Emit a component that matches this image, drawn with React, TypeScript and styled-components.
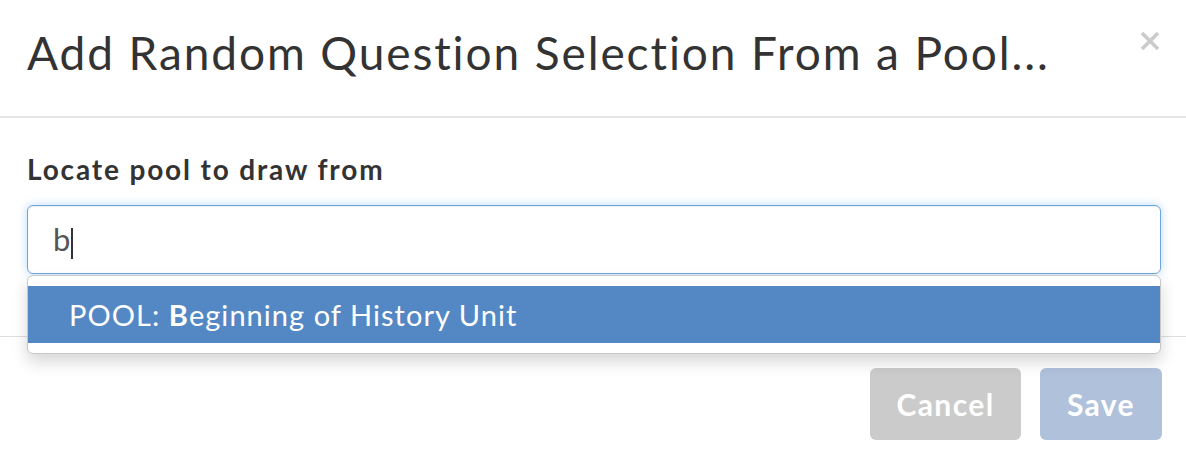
import React, { FC } from "react";
import styled, { createGlobalStyle } from "styled-components";

const GlobalStyle = createGlobalStyle`
  html, body {
    margin: 0;
    padding: 0;
    background: #fff;
  }
  body {
    font-family: Lato, "Open Sans", Arial, sans-serif;
    color: #333;
  }
`;

type ButtonProps = {
  $tone: "muted" | "primary";
  $width: number;
};

const App: FC = () => {
  return (
    <>
      <GlobalStyle />
      <Modal>
        <Header>
          <Title>Add Random Question Selection From a Pool...</Title>
          <CloseButton aria-label="Close">
            <svg width="20" height="20" viewBox="0 0 20 20">
              <path
                d="M2 2 L18 18 M18 2 L2 18"
                stroke="#cbcbcb"
                strokeWidth="3.6"
                strokeLinecap="butt"
              />
            </svg>
          </CloseButton>
        </Header>

        <Body>
          <Label>Locate pool to draw from</Label>
          <SearchWrap>
            <SearchBox>
              <Typed>b</Typed>
              <Caret />
            </SearchBox>
            <Menu>
              <MenuItem $active>
                POOL: <strong>B</strong>eginning of History Unit
              </MenuItem>
            </Menu>
          </SearchWrap>
        </Body>

        <Footer>
          <ActionButton $tone="muted" $width={151}>
            Cancel
          </ActionButton>
          <ActionButton $tone="primary" $width={122}>
            Save
          </ActionButton>
        </Footer>
      </Modal>
    </>
  );
};

const Modal = styled.div`
  width: 1186px;
  height: 464px;
  display: flex;
  flex-direction: column;
  overflow: hidden;
`;

const Header = styled.div`
  height: 116px;
  flex-shrink: 0;
  display: flex;
  justify-content: space-between;
  align-items: flex-start;
  padding: 0 26px 0 27px;
  border-bottom: 2px solid #e6e6e6;
`;

const Title = styled.h1`
  margin: 25px 0 0;
  font-size: 46px;
  font-weight: 400;
  line-height: 56px;
  color: #333;
  letter-spacing: 1.9px;
`;

const CloseButton = styled.button`
  margin: 31px 0 0;
  padding: 0;
  border: 0;
  background: transparent;
  width: 20px;
  height: 20px;
  display: flex;
  cursor: pointer;
`;

const Body = styled.div`
  height: 218px;
  flex-shrink: 0;
  padding: 0 25px 0 27px;
  border-bottom: 1px solid #dedede;
  position: relative;
  z-index: 2;
`;

const Label = styled.div`
  margin-top: 35px;
  font-size: 28px;
  font-weight: 700;
  line-height: 32px;
  color: #333;
  letter-spacing: 1.85px;
`;

const SearchWrap = styled.div`
  position: relative;
  margin-top: 20px;
`;

const SearchBox = styled.div`
  height: 69px;
  box-sizing: border-box;
  border: 1.5px solid #6fa5de;
  border-radius: 6px;
  box-shadow: inset 0 1px 1px rgba(0, 0, 0, 0.075),
    0 0 10px rgba(102, 175, 233, 0.45);
  display: flex;
  align-items: center;
  padding-left: 25px;
  background: #fff;
`;

const Typed = styled.span`
  font-size: 31px;
  color: #555;
  line-height: 1;
`;

const Caret = styled.span`
  width: 1.5px;
  height: 31px;
  background: #333;
  margin-left: 1px;
  margin-top: 7px;
`;

const Menu = styled.div`
  position: absolute;
  top: calc(100% + 1px);
  left: 0;
  right: 0;
  box-sizing: border-box;
  padding: 10px 0;
  background: #fff;
  border: 1px solid #c8c8c8;
  border-radius: 6px;
  box-shadow: 0 8px 16px rgba(0, 0, 0, 0.16);
`;

const MenuItem = styled.div<{ $active?: boolean }>`
  height: 57px;
  display: flex;
  align-items: center;
  padding-left: 41px;
  font-size: 29px;
  letter-spacing: 1.05px;
  color: ${(p) => (p.$active ? "#fff" : "#333")};
  background: ${(p) => (p.$active ? "#5488c4" : "transparent")};
  white-space: pre;

  strong {
    font-weight: 700;
  }
`;

const Footer = styled.div`
  display: flex;
  justify-content: flex-end;
  gap: 19px;
  padding: 31px 24px 0 0;
`;

const ActionButton = styled.button<ButtonProps>`
  width: ${(p) => p.$width}px;
  height: 72px;
  border: 0;
  border-radius: 6px;
  font-family: inherit;
  font-size: 30px;
  font-weight: 700;
  letter-spacing: 1.4px;
  color: #fff;
  background: ${(p) => (p.$tone === "primary" ? "#b0c1dc" : "#cbcbcb")};
  cursor: pointer;
`;

export default App;
